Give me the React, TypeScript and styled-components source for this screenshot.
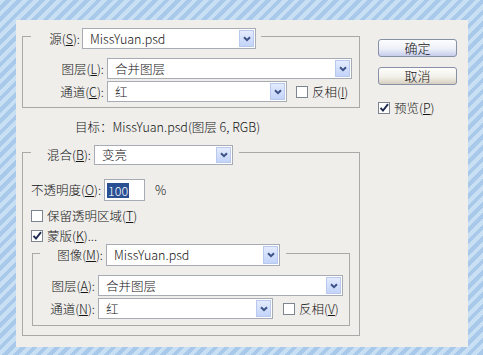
import React from "react";
import styled, { createGlobalStyle } from "styled-components";

const GlobalStyle = createGlobalStyle`
  * { box-sizing: border-box; }
  body {
    margin: 0;
    font-family: "Noto Sans CJK SC", "Liberation Sans", sans-serif;
    font-size: 12.5px;
    font-weight: 300;
    line-height: 16px;
    color: #141414;
  }
`;

const Desktop = styled.div`
  width: 483px;
  height: 355px;
  padding: 20px 0 0 16px;
  overflow: hidden;
  background: repeating-linear-gradient(135deg, #c9dff3 0 4px, #a8c9ea 4px 8px);
`;

const Dialog = styled.div`
  width: 452px;
  height: 327px;
  display: flex;
  gap: 18px;
  padding-left: 6px;
  background: #efeeeb;
`;

const LeftColumn = styled.div`
  width: 338px;
  padding-top: 8px;
  display: flex;
  flex-direction: column;
`;

const RightColumn = styled.div`
  width: 79px;
  padding-top: 19px;
  display: flex;
  flex-direction: column;
`;

const GroupBox = styled.fieldset<{ $mt?: number; $ml?: number }>`
  margin: ${(p) => p.$mt ?? 0}px 0 0 ${(p) => p.$ml ?? 0}px;
  padding: 0;
  min-width: 0;
  border: 1px solid #a9a9a9;
`;

const GroupLegend = styled.legend<{ $h: number; $ml: number; $pr: number }>`
  height: ${(p) => p.$h}px;
  margin-left: ${(p) => p.$ml}px;
  padding: 0 ${(p) => p.$pr}px 0 0;
`;

const GroupBody = styled.div<{ $pad: string }>`
  padding: ${(p) => p.$pad};
  display: flex;
  flex-direction: column;
`;

const FormRow = styled.div<{ $h?: number; $gap?: number; $mt?: number; $ml?: number }>`
  height: ${(p) => p.$h ?? 21}px;
  margin-top: ${(p) => p.$mt ?? 0}px;
  margin-left: ${(p) => p.$ml ?? 0}px;
  display: flex;
  align-items: center;
  gap: ${(p) => p.$gap ?? 3}px;
  white-space: nowrap;
`;

const FieldLabel = styled.span<{ $w: number }>`
  width: ${(p) => p.$w}px;
  flex-shrink: 0;
  text-align: right;
`;

const Key = styled.span`
  text-decoration: underline;
  text-underline-offset: 1px;
`;

const SelectBox = styled.div<{ $w: number; $h: number }>`
  width: ${(p) => p.$w}px;
  height: ${(p) => p.$h}px;
  flex-shrink: 0;
  display: flex;
  align-items: center;
  padding-left: 7px;
  border: 1px solid #a7acb4;
  background: #fff;
`;

const SelectText = styled.span`
  flex: 1;
`;

const ArrowButton = styled.span<{ $h: number }>`
  width: 15px;
  height: ${(p) => p.$h}px;
  margin-right: 1px;
  display: flex;
  align-items: center;
  justify-content: center;
  border: 1px solid #b9c9ee;
  background: linear-gradient(#e3ebfd, #c3d4fa);
`;

const Dropdown = ({ value, width, height = 21 }: { value: string; width: number; height?: number }) => (
  <SelectBox $w={width} $h={height}>
    <SelectText>{value}</SelectText>
    <ArrowButton $h={height - 4}>
      <svg width="8" height="6" viewBox="0 0 8 6">
        <path d="M1 1.2 L4 4.2 L7 1.2" fill="none" stroke="#3d5288" strokeWidth="2" />
      </svg>
    </ArrowButton>
  </SelectBox>
);

const CheckBox = styled.span`
  width: 12px;
  height: 12px;
  flex-shrink: 0;
  display: flex;
  align-items: center;
  justify-content: center;
  border: 1px solid #7d8590;
  background: #fff;
`;

const Check = ({ checked = false }: { checked?: boolean }) => (
  <CheckBox>
    {checked && (
      <svg width="10" height="10" viewBox="0 0 10 10">
        <path d="M1.5 4.8 L4 7.6 L9 1.2" fill="none" stroke="#1d2a4e" strokeWidth="1.9" />
      </svg>
    )}
  </CheckBox>
);

const TargetLine = styled.div`
  margin-top: 11px;
  padding-left: 53px;
  height: 16px;
`;

const NumberField = styled.div`
  width: 41px;
  height: 22px;
  flex-shrink: 0;
  display: flex;
  align-items: center;
  padding-left: 2px;
  border: 1px solid #a7acb4;
  background: #fff;
`;

const Selection = styled.span`
  padding: 0 1px;
  line-height: 15px;
  color: #fff;
  background: #2b4f93;
`;

const Percent = styled.span`
  margin-left: 7px;
`;

const DialogButton = styled.button<{ $primary?: boolean }>`
  width: 79px;
  height: 18px;
  padding: 0;
  border: 1px solid #8790a6;
  border-radius: 3px;
  font: inherit;
  font-size: 13px;
  line-height: 16px;
  color: #141414;
  background: ${(p) =>
    p.$primary
      ? "linear-gradient(#fdfdff, #eef0f8 55%, #c6ccec)"
      : "linear-gradient(#fefefc, #f2f0ea 55%, #d6cfbf)"};

  & + & {
    margin-top: 10px;
  }
`;

export default function App() {
  return (
    <>
      <GlobalStyle />
      <Desktop>
        <Dialog>
          <LeftColumn>
            <GroupBox>
              <GroupLegend $h={16} $ml={8} $pr={5}>
                <FormRow $gap={2}>
                  <FieldLabel $w={49}>源(<Key>S</Key>):</FieldLabel>
                  <Dropdown value="MissYuan.psd" width={174} />
                </FormRow>
              </GroupLegend>
              <GroupBody $pad="14px 6px 5px 30px">
                <FormRow>
                  <FieldLabel $w={51}>图层(<Key>L</Key>):</FieldLabel>
                  <Dropdown value="合并图层" width={245} />
                </FormRow>
                <FormRow $mt={2}>
                  <FieldLabel $w={51}>通道(<Key>C</Key>):</FieldLabel>
                  <Dropdown value="红" width={180} />
                  <FormRow $gap={4} $ml={6}>
                    <Check />
                    <span>反相(<Key>I</Key>)</span>
                  </FormRow>
                </FormRow>
              </GroupBody>
            </GroupBox>

            <TargetLine>目标：MissYuan.psd(图层 6, RGB)</TargetLine>

            <GroupBox $mt={10}>
              <GroupLegend $h={14} $ml={8} $pr={6}>
                <FormRow $h={20}>
                  <FieldLabel $w={60}>混合(<Key>B</Key>):</FieldLabel>
                  <Dropdown value="变亮" width={139} height={20} />
                </FormRow>
              </GroupLegend>
              <GroupBody $pad="20px 9px 9px 8px">
                <FormRow $h={22}>
                  <span>不透明度(<Key>O</Key>):</span>
                  <NumberField>
                    <Selection>100</Selection>
                  </NumberField>
                  <Percent>%</Percent>
                </FormRow>
                <FormRow $h={14} $gap={4} $mt={8}>
                  <Check />
                  <span>保留透明区域(<Key>T</Key>)</span>
                </FormRow>
                <FormRow $h={14} $gap={4} $mt={6}>
                  <Check checked />
                  <span>蒙版(<Key>K</Key>)...</span>
                </FormRow>

                <GroupBox $mt={1} $ml={1}>
                  <GroupLegend $h={18} $ml={7} $pr={6}>
                    <FormRow $h={22}>
                      <FieldLabel $w={63}>图像(<Key>M</Key>):</FieldLabel>
                      <Dropdown value="MissYuan.psd" width={174} height={22} />
                    </FormRow>
                  </GroupLegend>
                  <GroupBody $pad="13px 5px 6px 14px">
                    <FormRow>
                      <FieldLabel $w={48}>图层(<Key>A</Key>):</FieldLabel>
                      <Dropdown value="合并图层" width={245} />
                    </FormRow>
                    <FormRow $mt={2}>
                      <FieldLabel $w={48}>通道(<Key>N</Key>):</FieldLabel>
                      <Dropdown value="红" width={175} />
                      <FormRow $gap={4} $ml={7}>
                        <Check />
                        <span>反相(<Key>V</Key>)</span>
                      </FormRow>
                    </FormRow>
                  </GroupBody>
                </GroupBox>
              </GroupBody>
            </GroupBox>
          </LeftColumn>

          <RightColumn>
            <DialogButton $primary>确定</DialogButton>
            <DialogButton>取消</DialogButton>
            <FormRow $h={14} $gap={4} $mt={16}>
              <Check checked />
              <span>预览(<Key>P</Key>)</span>
            </FormRow>
          </RightColumn>
        </Dialog>
      </Desktop>
    </>
  );
}
